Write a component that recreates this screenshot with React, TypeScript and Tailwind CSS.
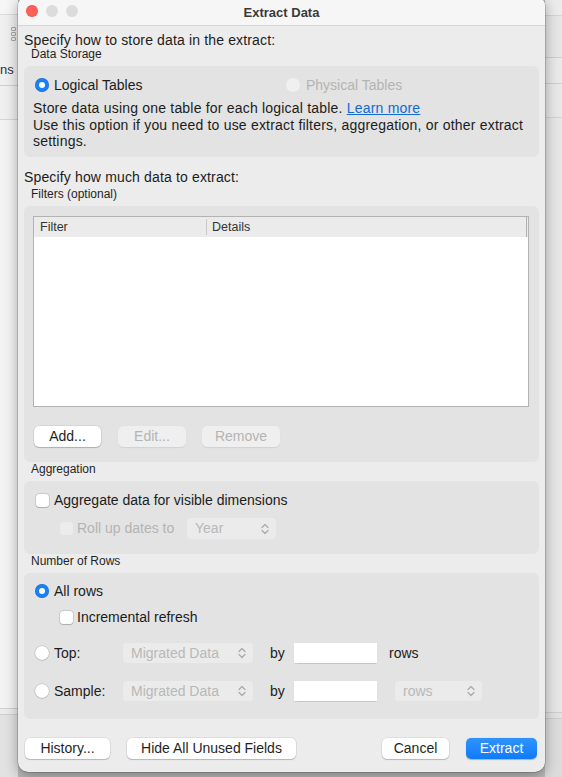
import React from 'react';

type Kids = { children?: React.ReactNode; className?: string };

function Radio({ checked, disabled }: { checked?: boolean; disabled?: boolean }) {
  if (checked) {
    return (
      <span className="flex h-[14px] w-[14px] shrink-0 items-center justify-center rounded-full bg-[#1a80f9] shadow-[inset_0_0_0_0.5px_rgba(0,0,0,0.2)]">
        <span className="h-[6px] w-[6px] rounded-full bg-white" />
      </span>
    );
  }
  return (
    <span
      className={`h-[14px] w-[14px] shrink-0 rounded-full ${
        disabled ? 'bg-[#f0f0f0]' : 'bg-white shadow-[0_0_0_0.5px_rgba(0,0,0,0.2),0_0.5px_1px_rgba(0,0,0,0.15)]'
      }`}
    />
  );
}

function Checkbox({ disabled }: { disabled?: boolean }) {
  return (
    <span
      className={`h-[13px] w-[13px] shrink-0 rounded-[3px] ${
        disabled ? 'bg-[#ececec]' : 'bg-white shadow-[0_0_0_0.5px_rgba(0,0,0,0.2),0_0.5px_1px_rgba(0,0,0,0.15)]'
      }`}
    />
  );
}

function Chevrons() {
  return (
    <svg width="8" height="12" viewBox="0 0 8 12" fill="none" stroke="#a9a9a9" strokeWidth="1.2" strokeLinecap="round" strokeLinejoin="round">
      <path d="M1 4.5 L4 1.5 L7 4.5" />
      <path d="M1 7.5 L4 10.5 L7 7.5" />
    </svg>
  );
}

function Select({ label, className = '' }: { label: string; className?: string }) {
  return (
    <div className={`flex h-[20px] items-center justify-between rounded-[4px] bg-[#ebebeb] pl-[8px] pr-[7px] text-[14px] text-[#b8b8b8] ${className}`}>
      <span>{label}</span>
      <Chevrons />
    </div>
  );
}

function Button({ children, className = '', disabled, primary }: Kids & { disabled?: boolean; primary?: boolean }) {
  const look = primary
    ? 'bg-gradient-to-b from-[#2f93fc] to-[#0d7bf8] text-white shadow-[0_0.5px_1px_rgba(0,0,0,0.25)]'
    : disabled
    ? 'bg-[#efefef] text-[#b4b4b4] shadow-[0_0.5px_1px_rgba(0,0,0,0.08)]'
    : 'bg-white text-[#1f1f1f] shadow-[0_0_0_0.5px_rgba(0,0,0,0.12),0_1px_1px_rgba(0,0,0,0.18)]';
  return (
    <div className={`flex h-[21px] shrink-0 items-center justify-center rounded-[5px] text-[14px] ${look} ${className}`}>{children}</div>
  );
}

function Group({ children, className = '' }: Kids) {
  return <div className={`rounded-[6px] bg-[#e3e3e3] ${className}`}>{children}</div>;
}

function SmallLabel({ children, className = '' }: Kids) {
  return <div className={`pl-[7px] text-[12px] leading-[13px] text-[#1f1f1f] ${className}`}>{children}</div>;
}

function LeftStrip() {
  return (
    <div className="flex w-[18px] shrink-0 flex-col bg-[#f0f0f0]">
      <div className="h-[15px] border-b border-[#dcdcdc] bg-[#f6f6f6]" />
      <div className="mt-[12px] ml-[11px] grid w-[5px] gap-[1px]">
        <span className="h-[4px] w-[5px] rounded-[1px] border border-[#a8a8a8]" />
        <span className="h-[4px] w-[5px] rounded-[1px] border border-[#a8a8a8]" />
        <span className="h-[4px] w-[5px] rounded-[1px] border border-[#a8a8a8]" />
      </div>
      <div className="mt-[21px] h-[15px] text-[13px] leading-[15px] text-[#333]">ns</div>
      <div className="mt-[8px] h-[34px] border-t border-[#cfcfcf]" />
      <div className="h-[589px] border-t border-[#d6d6d6] bg-[#f3f3f3]" />
      <div className="h-[6px] border-t border-[#d0d0d0] bg-[#ececec]" />
      <div className="flex-1 border-t border-[#d0d0d0] bg-[#e2e2e2]" />
    </div>
  );
}

function RightStrip() {
  return (
    <div className="flex flex-1 flex-col bg-[#e4e4e4]">
      <div className="h-[15px] bg-[#ececec]" />
      <div className="h-[42px] border-t border-[#d4d4d4] bg-[#e6e6e6]" />
      <div className="h-[26px] border-t border-[#cfcfcf] bg-[#e9e9e9]" />
      <div className="h-[34px] border-t border-[#cfcfcf] bg-[#e8e8e8]" />
      <div className="h-[595px] border-t border-[#d2d2d2] bg-[#e6e6e6]" />
      <div className="h-[6px] border-t border-[#cdcdcd] bg-[#e2e2e2]" />
      <div className="flex-1 border-t border-[#cdcdcd] bg-[#dcdcdc]" />
    </div>
  );
}

function Dialog() {
  return (
    <div className="relative z-10 mt-[-4px] flex h-[776px] w-[527px] shrink-0 flex-col overflow-hidden rounded-[10px] bg-[#ececec] text-[14px] text-[#1c1c1c] shadow-[0_0_0_0.5px_rgba(0,0,0,0.3),0_4px_14px_rgba(0,0,0,0.35)]">
      <div className="relative flex h-[30px] shrink-0 items-center justify-center border-b border-[#d6d6d6] bg-[#f6f6f6] pt-[4px]">
        <div className="absolute left-[8px] top-[9px] flex gap-[8px]">
          <span className="h-[12px] w-[12px] rounded-full bg-[#fe5f57] shadow-[inset_0_0_0_0.5px_rgba(0,0,0,0.12)]" />
          <span className="h-[12px] w-[12px] rounded-full bg-[#dcdcdc]" />
          <span className="h-[12px] w-[12px] rounded-full bg-[#dcdcdc]" />
        </div>
        <span className="text-[13px] font-bold text-[#3a3a3a]">Extract Data</span>
      </div>

      <div className="flex flex-1 flex-col px-[6px]">
        <div className="mt-[6px] leading-[16px] tracking-[0.15px]">Specify how to store data in the extract:</div>
        <SmallLabel className="mt-[0px]">Data Storage</SmallLabel>

        <Group className="mt-[5px] h-[91px] px-[9px] pt-[12px]">
          <div className="flex h-[14px] items-center pl-[2px]">
            <div className="flex w-[251px] items-center gap-[5px]">
              <Radio checked />
              <span>Logical Tables</span>
            </div>
            <div className="flex items-center gap-[6px] text-[#b4b4b4]">
              <Radio disabled />
              <span>Physical Tables</span>
            </div>
          </div>
          <div className="mt-[8px] leading-[16.5px] tracking-[0.2px]">
            <div>
              Store data using one table for each logical table.{' '}
              <span className="text-[#1069d6] underline">Learn more</span>
            </div>
            <div>Use this option if you need to use extract filters, aggregation, or other extract</div>
            <div>settings.</div>
          </div>
        </Group>

        <div className="mt-[12px] leading-[16px] tracking-[0.15px]">Specify how much data to extract:</div>
        <SmallLabel className="mt-[3px]">Filters (optional)</SmallLabel>

        <Group className="mt-[5px] h-[256px] pt-[10px]">
          <div className="ml-[9px] flex h-[191px] w-[496px] flex-col border border-[#b3b3b3] bg-white">
            <div className="flex h-[20px] items-center bg-[#ebebeb] text-[12.5px] text-[#333]">
              <div className="flex h-[16px] w-[173px] items-center border-r border-[#c9c9c9] pl-[6px]">Filter</div>
              <div className="flex-1 pl-[5px]">Details</div>
              <div className="h-[20px] w-[2px] border-l border-[#b0b0b0]" />
            </div>
          </div>
          <div className="mt-[19px] flex items-center pl-[10px]">
            <Button className="w-[67px]">Add...</Button>
            <Button disabled className="ml-[17px] w-[68px]">Edit...</Button>
            <Button disabled className="ml-[16px] w-[78px]">Remove</Button>
          </div>
        </Group>

        <SmallLabel className="mt-[1px]">Aggregation</SmallLabel>

        <Group className="mt-[5px] h-[73px] pl-[12px] pt-[12px]">
          <div className="flex h-[14px] items-center gap-[5px]">
            <Checkbox />
            <span>Aggregate data for visible dimensions</span>
          </div>
          <div className="mt-[11px] flex h-[21px] items-center pl-[24px]">
            <div className="flex w-[127px] items-center gap-[4px] text-[#b4b4b4]">
              <Checkbox disabled />
              <span>Roll up dates to</span>
            </div>
            <Select label="Year" className="h-[21px] w-[89px]" />
          </div>
        </Group>

        <SmallLabel className="mt-[1px]">Number of Rows</SmallLabel>

        <Group className="mt-[5px] h-[146px] pl-[11px] pt-[11px]">
          <div className="flex h-[14px] items-center gap-[5px]">
            <Radio checked />
            <span>All rows</span>
          </div>
          <div className="mt-[12px] flex h-[14px] items-center gap-[4px] pl-[25px]">
            <Checkbox />
            <span>Incremental refresh</span>
          </div>
          <div className="mt-[19px] flex h-[20px] items-center">
            <div className="flex w-[88px] items-center gap-[5px]">
              <Radio />
              <span>Top:</span>
            </div>
            <Select label="Migrated Data" className="w-[130px]" />
            <span className="ml-[17px] w-[24px]">by</span>
            <div className="h-[20px] w-[83px] bg-white shadow-[0_0.5px_1px_rgba(0,0,0,0.12)]" />
            <span className="ml-[12px]">rows</span>
          </div>
          <div className="mt-[18px] flex h-[20px] items-center">
            <div className="flex w-[88px] items-center gap-[5px]">
              <Radio />
              <span>Sample:</span>
            </div>
            <Select label="Migrated Data" className="w-[130px]" />
            <span className="ml-[17px] w-[24px]">by</span>
            <div className="h-[20px] w-[83px] bg-white shadow-[0_0.5px_1px_rgba(0,0,0,0.12)]" />
            <Select label="rows" className="ml-[18px] w-[87px]" />
          </div>
        </Group>

        <div className="mt-[19px] flex items-center">
          <Button className="ml-[1px] w-[85px]">History...</Button>
          <Button className="ml-[17px] w-[169px]">Hide All Unused Fields</Button>
          <div className="flex-1" />
          <Button className="w-[67px]">Cancel</Button>
          <Button primary className="ml-[17px] mr-[2px] w-[71px]">Extract</Button>
        </div>
      </div>
    </div>
  );
}

export default function App() {
  return (
    <div className="flex h-[777px] w-[562px] overflow-hidden bg-[#e6e6e6] font-['Liberation_Sans',Arial,sans-serif]">
      <LeftStrip />
      <div className="flex flex-col bg-[#bdbdbd]">
        <Dialog />
      </div>
      <RightStrip />
    </div>
  );
}
